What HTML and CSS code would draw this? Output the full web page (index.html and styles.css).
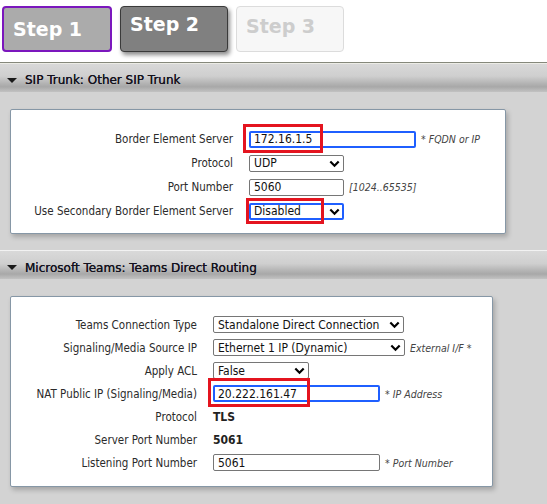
FILE: index.html
```html
<!DOCTYPE html>
<html lang="en">
<head>
<meta charset="UTF-8">
<meta name="viewport" content="width=device-width, initial-scale=1">
<title>SBC Wizard</title>
<link rel="stylesheet" href="styles.css">
</head>
<body>

<!-- Wizard steps -->
<div class="steps">
<div class="step current">Step 1</div>
<div class="step active">Step 2</div>
<div class="step idle">Step 3</div>
</div>

<!-- SIP trunk -->
<div class="section first">
<div class="sec-head"><span class="tri"></span>SIP Trunk: Other SIP Trunk</div>
<div class="sec-body">
<div class="box">
<div class="form form-a">
<div class="lbl">Border Element Server</div>
<div class="val">
<span class="mark"><span class="field wide focus">172.16.1.5</span><span class="red r1"></span></span>
<span class="hint">* FQDN or IP</span>
</div>

<div class="lbl">Protocol</div>
<div class="val"><span class="field sel w94">UDP<svg class="chev" viewBox="0 0 10 7"><path d="M1.2 1.3 5 5.1 8.8 1.3" /></svg></span></div>

<div class="lbl">Port Number</div>
<div class="val"><span class="field w94">5060</span><span class="hint">[1024..65535]</span></div>

<div class="lbl">Use Secondary Border Element Server</div>
<div class="val">
<span class="mark"><span class="field sel w94 focus">Disabled<svg class="chev" viewBox="0 0 10 7"><path d="M1.2 1.3 5 5.1 8.8 1.3" /></svg></span><span class="red r2"></span></span>
</div>
</div>
</div>
</div>
</div>

<!-- Teams -->
<div class="section">
<div class="sec-head"><span class="tri"></span>Microsoft Teams: Teams Direct Routing</div>
<div class="sec-body">
<div class="box box-b">
<div class="form form-b">
<div class="lbl">Teams Connection Type</div>
<div class="val"><span class="field sel w190">Standalone Direct Connection<svg class="chev" viewBox="0 0 10 7"><path d="M1.2 1.3 5 5.1 8.8 1.3" /></svg></span></div>

<div class="lbl">Signaling/Media Source IP</div>
<div class="val"><span class="field sel w191">Ethernet 1 IP (Dynamic)<svg class="chev" viewBox="0 0 10 7"><path d="M1.2 1.3 5 5.1 8.8 1.3" /></svg></span><span class="hint">External I/F *</span></div>

<div class="lbl">Apply ACL</div>
<div class="val"><span class="field sel w95">False<svg class="chev" viewBox="0 0 10 7"><path d="M1.2 1.3 5 5.1 8.8 1.3" /></svg></span></div>

<div class="lbl">NAT Public IP (Signaling/Media)</div>
<div class="val">
<span class="mark"><span class="field w167 focus">20.222.161.47</span><span class="red r3"></span></span>
<span class="hint">* IP Address</span>
</div>

<div class="lbl">Protocol</div>
<div class="val"><b class="fixed">TLS</b></div>

<div class="lbl">Server Port Number</div>
<div class="val"><b class="fixed">5061</b></div>

<div class="lbl">Listening Port Number</div>
<div class="val"><span class="field w167">5061</span><span class="hint">* Port Number</span></div>
</div>
</div>
</div>
</div>

</body>
</html>
```

FILE: styles.css
```css
*{margin:0;padding:0;box-sizing:border-box;}
body{background:#fff;font-family:"DejaVu Sans",Verdana,sans-serif;color:#222;width:547px;height:504px;overflow:hidden;}

/* Steps */
.steps{display:flex;gap:8px;height:62px;padding:6px 0 0 2px;}
.step{
width:108px;height:46px;border-radius:4px;font-weight:bold;font-size:19px;color:#fff;
padding-left:9px;
}
.step.current{background:#ababab;border:2px solid #7b17bd;padding-top:10px;width:110px;height:46px;}
.step.active{background:#808080;border:1px solid #3a3a3a;padding-top:6px;box-shadow:2px 3px 4px rgba(0,0,0,.45);}
.step.idle{background:#f7f7f7;border:1px solid #dcdcdc;color:#cdcdcd;padding-top:8px;}

/* Sections */
.section{background:#d3d3d3;}
.sec-head{
height:29px;display:flex;align-items:center;gap:8px;padding:5px 0 0 7px;
font-size:12px;color:#14121e;text-shadow:0 0 .4px #14121e;
background:linear-gradient(#d9d9d9 0%,#cfcfcf 45%,#b4b4b4 70%,#a8a8a8 82%,#c2c2c2 100%);
border-top:1px solid #f2f2f2;
}
.first .sec-head{border-top:1px solid #85887b;box-shadow:inset 0 1px 0 #ecece6;height:30px;}
.tri{width:0;height:0;border-left:5px solid transparent;border-right:5px solid transparent;border-top:5px solid #1a1a1a;}

.sec-body{padding:17px 41px 16px 10px;}
.section:last-child .sec-body{padding:17px 54px 30px 10px;}
.box{
background:#fff;border:1px solid #8697a6;border-radius:2px;
box-shadow:2px 3px 5px rgba(0,0,0,.22);
padding:17px 0 10px;
}
.box-b{padding:16px 0 12px;}

/* Form rows */
.form{
display:grid;column-gap:16px;
font-family:"DejaVu Sans Condensed","DejaVu Sans",sans-serif;font-stretch:condensed;font-size:11.5px;
}
.form-a{grid-template-columns:222px 1fr;grid-auto-rows:24px;}
.form-b{grid-template-columns:186px 1fr;grid-auto-rows:23px;}
.lbl{text-align:right;align-self:center;color:#2b2b2b;white-space:nowrap;}
.val{display:flex;align-items:center;gap:5px;white-space:nowrap;}

.field{
position:relative;display:flex;align-items:center;height:17px;
border:1px solid #767676;border-radius:2px;background:#fff;
padding-left:4px;font-size:12px;color:#111;
}
.field.focus{border:2px solid #1f5fff;padding-left:3px;}
.sel{padding-right:18px;}
.chev{position:absolute;right:3px;top:4px;width:11px;height:8px;fill:none;stroke:#000;stroke-width:2;}
.field.focus .chev{right:2px;top:3px;}
.wide{width:167px;}
.w94{width:95px;}
.w95{width:96px;}
.w167{width:167px;}
.w190{width:191px;}
.w191{width:192px;}
.hint{font-style:italic;font-size:10.5px;color:#444;}
.fixed{font-size:12px;color:#222;}

/* Highlight frames drawn over the fields */
.mark{position:relative;display:flex;}
.red{position:absolute;border:3px solid #e4141f;pointer-events:none;}
.r1{left:-6px;top:-7px;width:80px;height:29px;}
.r2{left:-3px;top:-5px;width:78px;height:26px;}
.r3{left:-5px;top:-7px;width:102px;height:29px;}
```
